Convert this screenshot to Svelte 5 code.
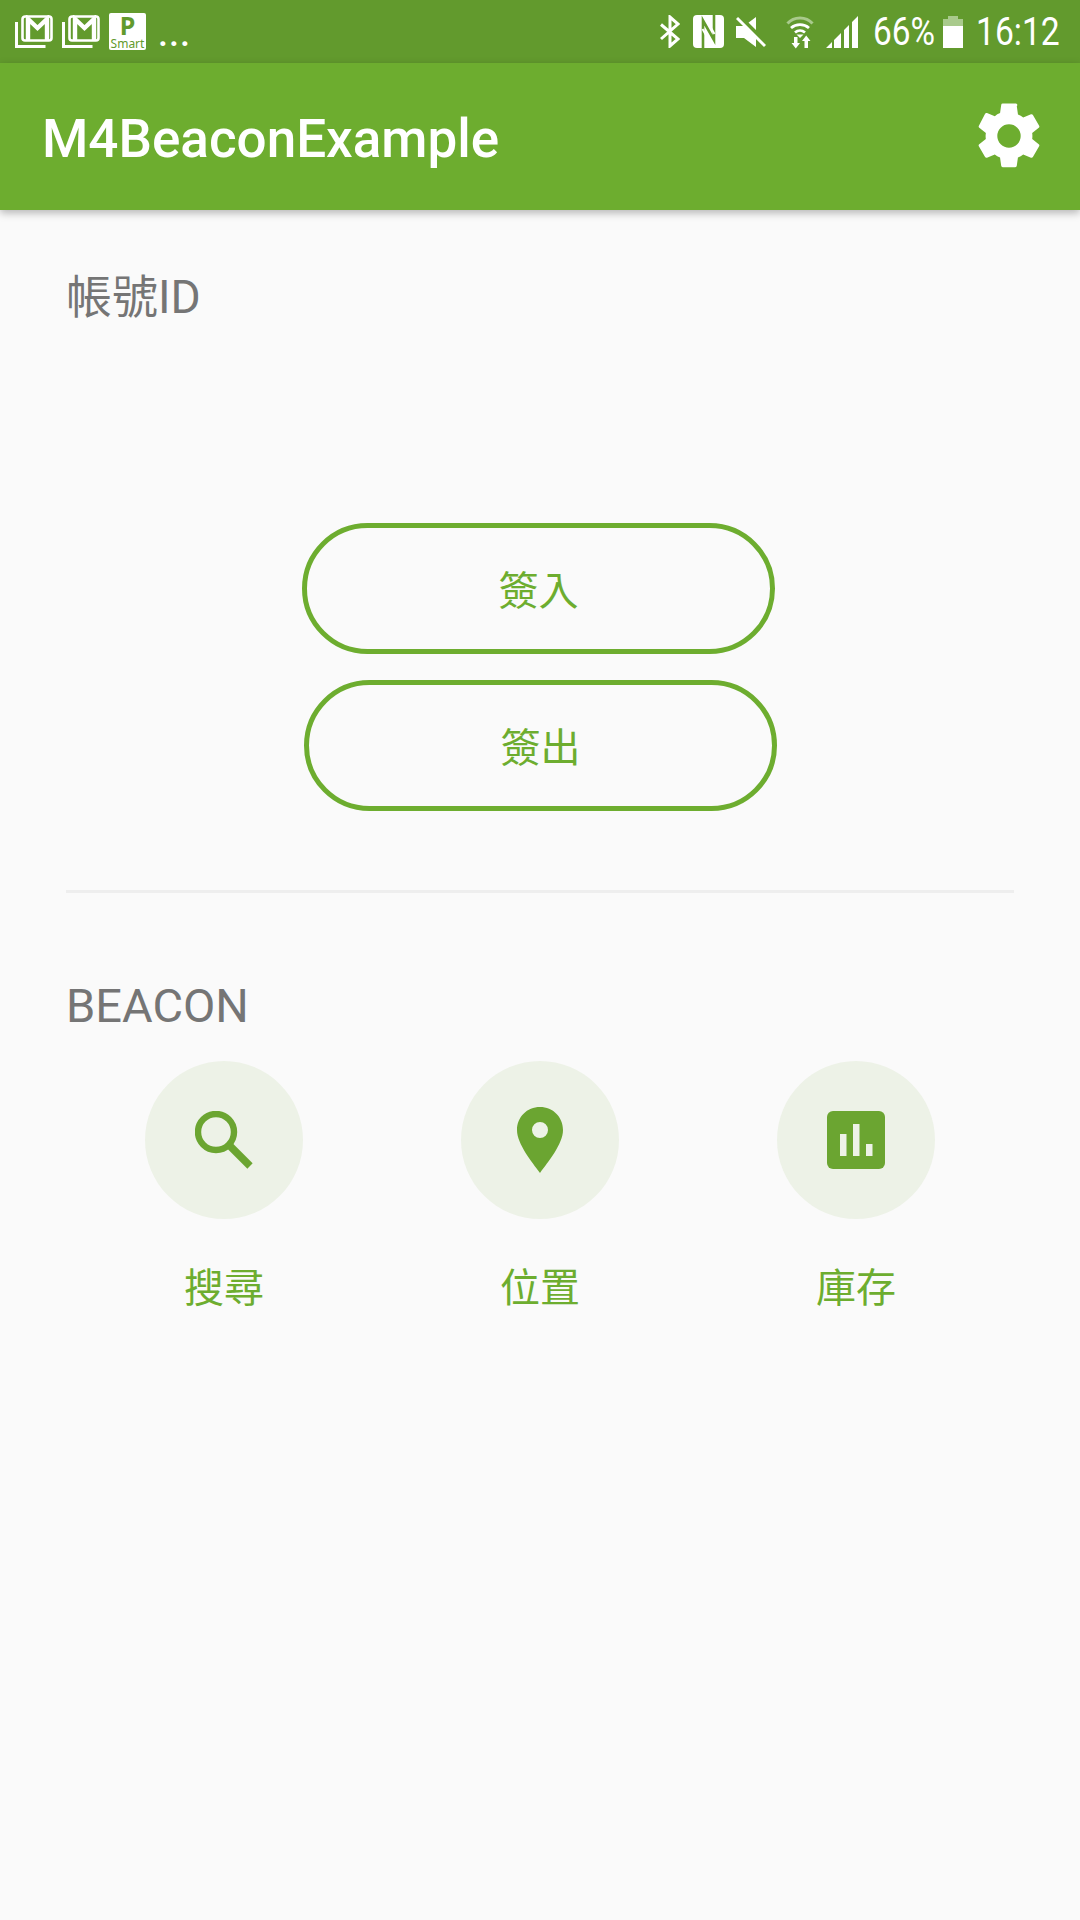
<script>
    const actions = [
        { key: 'search', label: '搜尋' },
        { key: 'place', label: '位置' },
        { key: 'stock', label: '庫存' }
    ];
</script>

<div class="app">
    <div class="statusbar">
        <div class="notifs">
            {#each [0, 1] as _}
                <svg class="gmail" viewBox="0 0 38 34" width="38" height="34">
                    <path d="M1.500 7v24.500h29" fill="none" stroke="#fff" stroke-width="3"/>
                    <rect x="7.500" y="1.500" width="29" height="24" rx="2.500" fill="none" stroke="#fff" stroke-width="2.600"/>
                    <path d="M13 25V4l9.500 9L32 4v21" fill="none" stroke="#fff" stroke-width="4.400"/>
                </svg>
            {/each}
            <div class="psmart"><span class="p">P</span><span class="smart">Smart</span></div>
            <span class="dots">...</span>
        </div>
        <div class="sysicons">
            <svg class="bt" viewBox="0 0 21 33" width="21" height="33">
                <path d="M2 9.500l17 14.500-8 7V2l8 7L2 24" fill="none" stroke="#fff" stroke-width="3"/>
            </svg>
            <svg class="nfc" viewBox="0 0 31 33" width="31" height="33">
                <rect width="31" height="33" rx="4" fill="#fff"/>
                <path d="M10 33V5.500L21 25V0" fill="none" stroke="#629a2d" stroke-width="2.600"/>
                <path d="M13.500 5l8 14" fill="none" stroke="#fff" stroke-width="2"/>
                <path d="M9.500 14l8 14" fill="none" stroke="#fff" stroke-width="2"/>
            </svg>
            <svg class="mute" viewBox="0 0 30 32" width="30" height="32">
                <path fill="#fff" d="M0 10h8L20 1v30L8 22H0z"/>
                <path d="M3 1l27 27" stroke="#629a2d" stroke-width="5.500"/>
                <path d="M1 2l28 28" stroke="#fff" stroke-width="3"/>
            </svg>
            <svg class="wifi" viewBox="0 0 28 34" width="28" height="34">
                <path d="M1.500 8.500C8 1 20 1 26.500 8.500" fill="none" stroke="#a9ca8c" stroke-width="3"/>
                <path d="M5 13c5-4.500 13-4.500 18 0M9 17.500c3-2.500 7-2.500 10 0" fill="none" stroke="#fff" stroke-width="2.800"/>
                <path d="M14 23l-3.500-3.500h7z" fill="#fff"/>
                <path d="M8 22h3.500v6H14l-4.200 5.500L5.500 28H8zM18.500 33v-7H16l4.200-5.500L24.500 26H22v7z" fill="#fff"/>
            </svg>
            <svg class="signal" viewBox="0 0 32 32" width="32" height="32">
                <path fill="#fff" d="M0 32l6-6v6zM8 32V24l7-7v15zM18 32V14l5-5v23zM26 32V6l6-6v32z"/>
            </svg>
            <span class="batt-text">66%</span>
            <div class="battery"><div class="batt-cap"></div><div class="batt-empty"></div><div class="batt-fill"></div></div>
            <span class="clock">16:12</span>
        </div>
    </div>

    <header class="appbar">
        <h1>M4BeaconExample</h1>
        <svg class="gear" viewBox="0 0 24 24" width="78" height="78">
            <path fill="#fff" d="M19.140 12.940c.04-.3.06-.61.06-.94s-.02-.64-.07-.94l2.030-1.580a.49.49 0 0 0 .12-.61l-1.920-3.320a.49.49 0 0 0-.59-.22l-2.390.96a7 7 0 0 0-1.620-.94l-.36-2.540A.48.48 0 0 0 13.920 2h-3.840a.47.47 0 0 0-.47.41l-.36 2.540c-.59.24-1.130.57-1.620.94l-2.390-.96a.49.49 0 0 0-.59.22L2.740 8.870a.48.48 0 0 0 .12.61l2.030 1.580c-.05.3-.09.63-.09.94s.02.64.07.94l-2.030 1.580a.49.49 0 0 0-.12.61l1.920 3.320c.12.22.37.29.59.22l2.390-.96c.5.38 1.030.7 1.620.94l.36 2.540c.05.24.24.41.48.41h3.840c.24 0 .44-.17.47-.41l.36-2.540c.59-.24 1.130-.56 1.620-.94l2.390.96c.22.080.47 0 .59-.22l1.920-3.320a.48.48 0 0 0-.12-.61zM12 15.600a3.600 3.600 0 1 1 0-7.200 3.600 3.600 0 0 1 0 7.200z"/>
        </svg>
    </header>

    <main>
        <h2 class="account">帳號ID</h2>

        <div class="buttons">
            <button class="pill first">簽入</button>
            <button class="pill second">簽出</button>
        </div>

        <hr />

        <h2 class="beacon">BEACON</h2>

        <div class="actions">
            {#each actions as a}
                <div class="action">
                    <div class="circle">
                        {#if a.key === 'search'}
                            <svg viewBox="0 0 58 58" width="58" height="58">
                                <circle cx="21" cy="21" r="18" fill="none" stroke="#6ba531" stroke-width="6.400"/>
                                <path d="M34 34l21 21" stroke="#6ba531" stroke-width="7.500"/>
                            </svg>
                        {:else if a.key === 'place'}
                            <svg viewBox="0 0 46 66" width="46" height="66">
                                <path fill="#6ba531" fill-rule="evenodd" d="M23 0C10 0 0 10 0 23c0 14 15 32 23 43 8-11 23-29 23-43C46 10 36 0 23 0zm0 15a8 8 0 1 1 0 16 8 8 0 0 1 0-16z"/>
                            </svg>
                        {:else}
                            <svg viewBox="0 0 58 58" width="58" height="58">
                                <rect width="58" height="58" rx="6" fill="#6ba531"/>
                                <path fill="#edf2e7" d="M13 23h6.500v22H13zM26 13h6.500v32H26zM39 33h6.500v12H39z"/>
                            </svg>
                        {/if}
                    </div>
                    <span class="action-label">{a.label}</span>
                </div>
            {/each}
        </div>
    </main>
</div>

<style>
    :global(body) {
        margin: 0;
        background: #fafafa;
    }

    .app {
        width: 1080px;
        height: 1920px;
        background: #fafafa;
        font-family: Roboto, "Noto Sans CJK TC", sans-serif;
        overflow: hidden;
    }

    .statusbar {
        height: 63px;
        background: #629a2d;
        display: flex;
        justify-content: space-between;
        align-items: center;
        padding: 0 20px 0 15px;
        color: #fff;
    }
    .notifs { display: flex; align-items: center; gap: 9px; }
    .psmart {
        width: 37px;
        height: 37px;
        background: #fff;
        border-radius: 2px;
        color: #629a2d;
        display: flex;
        flex-direction: column;
        align-items: center;
        font-family: "Noto Sans", sans-serif;
    }
    .p { font-size: 25px; font-weight: 700; line-height: 25px; }
    .smart { font-size: 12px; line-height: 12px; }
    .dots {
        font-size: 36px;
        font-weight: 500;
        letter-spacing: 1px;
        line-height: 36px;
        margin-left: 3px;
        padding-top: 4px;
    }

    .sysicons { display: flex; align-items: center; }
    .nfc { margin-left: 13px; }
    .mute { margin-left: 12px; }
    .wifi { margin-left: 20px; }
    .signal { margin-left: 12px; }
    .batt-text {
        font-size: 38px;
        width: 60px;
        margin-left: 15px;
        transform: scaleX(0.88);
        transform-origin: left;
    }
    .battery { width: 20px; height: 32px; margin-left: 10px; display: flex; flex-direction: column; align-items: center; }
    .batt-cap { width: 10px; height: 3px; background: #a9ca8c; }
    .batt-empty { width: 20px; height: 7px; background: #a9ca8c; }
    .batt-fill { width: 20px; flex: 1; background: #fff; }
    .clock {
        font-size: 38px;
        width: 84px;
        margin-left: 13px;
        transform: scaleX(0.885);
        transform-origin: left;
    }

    .appbar {
        height: 147px;
        background: #6dad2f;
        box-shadow: 0 3px 8px rgba(0, 0, 0, 0.28);
        display: flex;
        align-items: center;
        justify-content: space-between;
        padding: 0 32px 0 42px;
        position: relative;
    }
    h1 {
        margin: 4px 0 0;
        font-size: 53px;
        font-weight: 500;
        color: #fff;
    }
    .gear { margin-bottom: 2px; }

    main { padding: 0 66px; }

    h2 {
        margin: 0;
        font-weight: 400;
        font-size: 47px;
        line-height: 48px;
        color: #757575;
    }
    .account { padding-top: 63px; font-size: 46px; }

    .buttons {
        margin-top: 202px;
        display: flex;
        flex-direction: column;
        align-items: center;
        gap: 26px;
    }
    .pill {
        width: 473px;
        height: 131px;
        border: 5px solid #6dad2f;
        border-radius: 66px;
        background: transparent;
        color: #6dad2f;
        font-family: inherit;
        font-size: 40px;
        padding: 0 0 2px;
    }
    .first { margin-right: 3px; }
    .second { margin-left: 1px; }

    hr {
        margin: 79px 0 0;
        border: 0;
        height: 3px;
        background: #eeeeee;
    }

    .beacon { margin-top: 89px; }

    .actions {
        margin-top: 31px;
        display: grid;
        grid-template-columns: repeat(3, 316px);
        justify-content: center;
    }
    .action { display: flex; flex-direction: column; align-items: center; }
    .circle {
        width: 158px;
        height: 158px;
        border-radius: 50%;
        background: #edf2e7;
        display: flex;
        align-items: center;
        justify-content: center;
    }
    .action-label {
        margin-top: 47px;
        font-size: 40px;
        line-height: 46px;
        color: #6dad2f;
    }
</style>
